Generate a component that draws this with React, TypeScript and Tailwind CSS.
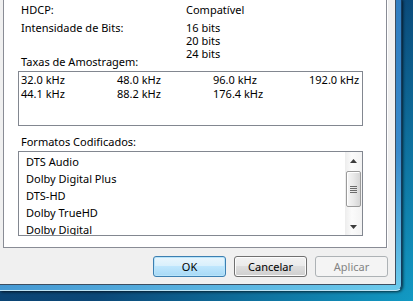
import React from "react";

function Arrow({ up }: { up?: boolean }) {
  return (
    <svg width="7" height="4" viewBox="0 0 7 4" className="block">
      {up ? (
        <path d="M3.5 0 L7 4 L0 4 Z" fill="#3c3c3c" />
      ) : (
        <path d="M0 0 L7 0 L3.5 4 Z" fill="#3c3c3c" />
      )}
    </svg>
  );
}

export default function App() {
  const rates = [
    ["32.0 kHz", "48.0 kHz", "96.0 kHz", "192.0 kHz"],
    ["44.1 kHz", "88.2 kHz", "176.4 kHz", ""],
  ];
  const formats = ["DTS Audio", "Dolby Digital Plus", "DTS-HD", "Dolby TrueHD", "Dolby Digital"];
  return (
    <div className="w-[413px] h-[301px] overflow-hidden bg-[linear-gradient(135deg,#0a3a6a_0%,#0b4777_55%,#129ac4_100%)] font-['Noto_Sans',sans-serif] text-[11px] leading-[13px] text-black">
      <div className="w-[402px] h-[292px] rounded-br-[6px] border-r border-b border-r-[#163a5c] border-b-[#bfe3f3] bg-[linear-gradient(165deg,#2a74b8_0%,#3a8bcc_65%,#6ccbec_100%)] shadow-[1px_1px_3px_rgba(0,0,0,0.7)]">
        <div className="w-[396px] h-[286px] bg-[#f0f0f0] border-r border-b border-[#3d4e60]">
          <div className="ml-[3px] mt-[-1px] w-[384px] h-[249px] bg-white border border-[#898c95] shadow-[1px_0_0_#ffffff] pl-[14px] pt-[3px]">
            <div className="flex ml-[3px]">
              <div className="w-[165px]">HDCP:</div>
              <div>Compatível</div>
            </div>
            <div className="flex ml-[3px] mt-[5px] items-start">
              <div className="w-[165px]">
                <div>Intensidade de Bits:</div>
                <div className="mt-[21px]">Taxas de Amostragem:</div>
              </div>
              <div>
                <div>16 bits</div>
                <div>20 bits</div>
                <div>24 bits</div>
              </div>
            </div>
            <div className="mt-[3px] w-[345px] h-[55px] border border-[#828790] pt-[1px] pl-[2px] leading-[14px]">
              {rates.map((row, i) => (
                <div key={i} className="flex">
                  {row.map((c, j) => (
                    <div key={j} className="w-[96px] shrink-0 whitespace-nowrap">
                      {c}
                    </div>
                  ))}
                </div>
              ))}
            </div>
            <div className="ml-[3px] mt-[9px]">Formatos Codificados:</div>
            <div className="mt-[3px] w-[345px] h-[85px] border border-[#828790] flex overflow-hidden">
              <div className="flex-1 pt-[1px] pl-[7px] leading-[17px]">
                {formats.map((f) => (
                  <div key={f} className="whitespace-nowrap">
                    {f}
                  </div>
                ))}
              </div>
              <div className="w-[17px] h-full flex flex-col bg-[linear-gradient(to_right,#ededed,#fbfbfb_40%,#f3f3f3)]">
                <div className="h-[17px] flex items-center justify-center">
                  <Arrow up />
                </div>
                <div className="h-[2px]" />
                <div className="mx-[1px] h-[36px] rounded-[2px] border border-[#9b9b9b] bg-[linear-gradient(to_right,#f6f6f6,#e9e9e9_50%,#d6d6d6)] shadow-[inset_1px_1px_0_#ffffff] flex flex-col items-center justify-center gap-[1px]">
                  <div className="w-[7px] h-[1px] bg-[#6b6b6b]" />
                  <div className="w-[7px] h-[1px] bg-[#6b6b6b]" />
                  <div className="w-[7px] h-[1px] bg-[#6b6b6b]" />
                  <div className="w-[7px] h-[1px] bg-[#6b6b6b]" />
                </div>
                <div className="flex-1" />
                <div className="h-[17px] flex items-center justify-center">
                  <Arrow />
                </div>
              </div>
            </div>
          </div>
          <div className="mt-[8px] flex justify-end gap-[8px] pr-[7px]">
            <div className="w-[73px] h-[21px] rounded-[3px] border border-[#3c7fb1] bg-[linear-gradient(to_bottom,#eaf6fd_0%,#d9f0fc_45%,#bee6fd_50%,#a7d9f5_100%)] shadow-[inset_0_0_0_1px_#b9e4fa] flex items-center justify-center">
              OK
            </div>
            <div className="w-[73px] h-[21px] rounded-[3px] border border-[#707070] bg-[linear-gradient(to_bottom,#f2f2f2_0%,#ebebeb_45%,#dddddd_50%,#cfcfcf_100%)] shadow-[inset_0_0_0_1px_#fcfcfc] flex items-center justify-center">
              Cancelar
            </div>
            <div className="w-[73px] h-[21px] rounded-[3px] border border-[#adb2b5] bg-[#f4f4f4] flex items-center justify-center text-[#838383]">
              Aplicar
            </div>
          </div>
        </div>
      </div>
    </div>
  );
}
